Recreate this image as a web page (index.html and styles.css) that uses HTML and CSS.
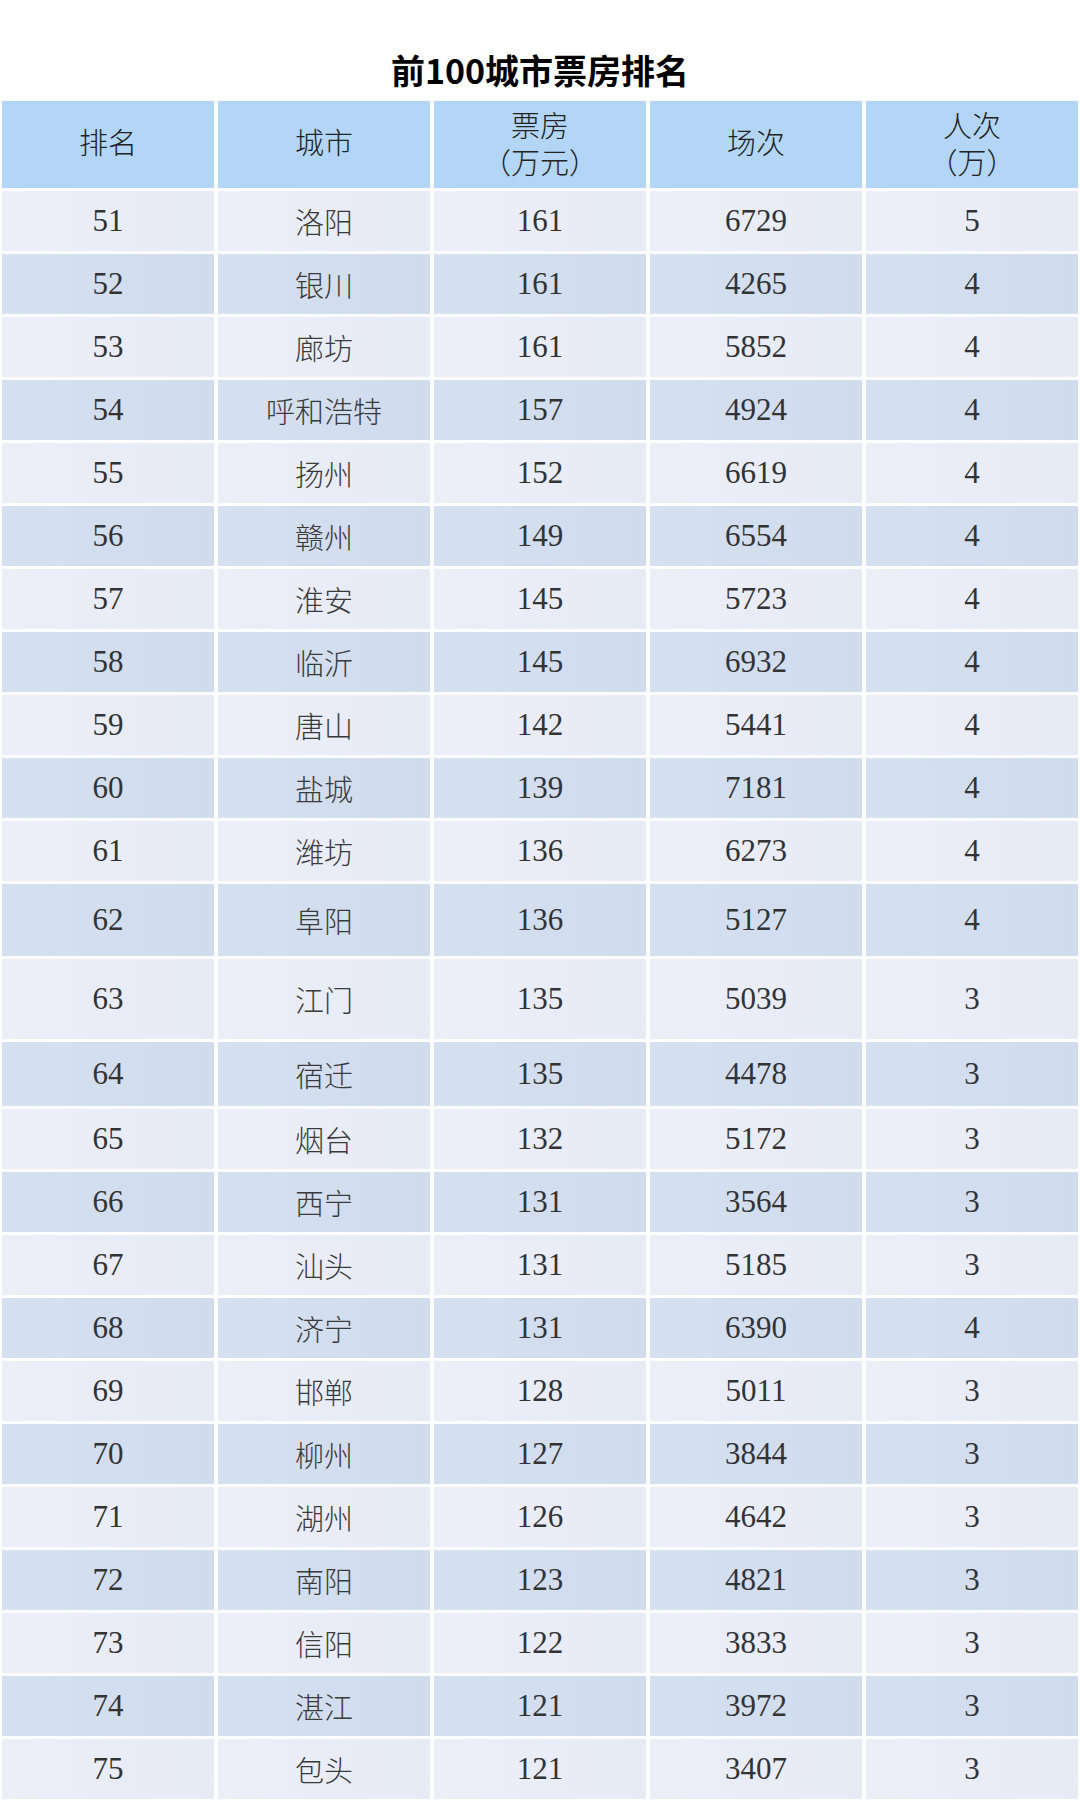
FILE: index.html
```html
<!DOCTYPE html>
<html lang="zh-CN">
<head>
<meta charset="utf-8">
<title>前100城市票房排名</title>
<link rel="stylesheet" href="styles.css">
</head>
<body>
<div class="page">
  <h1 class="title">前100城市票房排名</h1>
  <div class="table">
    <div class="row head">
      <div class="cell">排名</div>
      <div class="cell">城市</div>
      <div class="cell two">票房<br>（万元）</div>
      <div class="cell">场次</div>
      <div class="cell two">人次<br>（万）</div>
    </div>
    <div class="row odd"><div class="cell">51</div><div class="cell city">洛阳</div><div class="cell">161</div><div class="cell">6729</div><div class="cell">5</div></div>
    <div class="row even"><div class="cell">52</div><div class="cell city">银川</div><div class="cell">161</div><div class="cell">4265</div><div class="cell">4</div></div>
    <div class="row odd"><div class="cell">53</div><div class="cell city">廊坊</div><div class="cell">161</div><div class="cell">5852</div><div class="cell">4</div></div>
    <div class="row even"><div class="cell">54</div><div class="cell city">呼和浩特</div><div class="cell">157</div><div class="cell">4924</div><div class="cell">4</div></div>
    <div class="row odd"><div class="cell">55</div><div class="cell city">扬州</div><div class="cell">152</div><div class="cell">6619</div><div class="cell">4</div></div>
    <div class="row even"><div class="cell">56</div><div class="cell city">赣州</div><div class="cell">149</div><div class="cell">6554</div><div class="cell">4</div></div>
    <div class="row odd"><div class="cell">57</div><div class="cell city">淮安</div><div class="cell">145</div><div class="cell">5723</div><div class="cell">4</div></div>
    <div class="row even"><div class="cell">58</div><div class="cell city">临沂</div><div class="cell">145</div><div class="cell">6932</div><div class="cell">4</div></div>
    <div class="row odd"><div class="cell">59</div><div class="cell city">唐山</div><div class="cell">142</div><div class="cell">5441</div><div class="cell">4</div></div>
    <div class="row even"><div class="cell">60</div><div class="cell city">盐城</div><div class="cell">139</div><div class="cell">7181</div><div class="cell">4</div></div>
    <div class="row odd"><div class="cell">61</div><div class="cell city">潍坊</div><div class="cell">136</div><div class="cell">6273</div><div class="cell">4</div></div>
    <div class="row even tall-a"><div class="cell">62</div><div class="cell city">阜阳</div><div class="cell">136</div><div class="cell">5127</div><div class="cell">4</div></div>
    <div class="row odd tall-b"><div class="cell">63</div><div class="cell city">江门</div><div class="cell">135</div><div class="cell">5039</div><div class="cell">3</div></div>
    <div class="row even tall-c"><div class="cell">64</div><div class="cell city">宿迁</div><div class="cell">135</div><div class="cell">4478</div><div class="cell">3</div></div>
    <div class="row odd"><div class="cell">65</div><div class="cell city">烟台</div><div class="cell">132</div><div class="cell">5172</div><div class="cell">3</div></div>
    <div class="row even"><div class="cell">66</div><div class="cell city">西宁</div><div class="cell">131</div><div class="cell">3564</div><div class="cell">3</div></div>
    <div class="row odd"><div class="cell">67</div><div class="cell city">汕头</div><div class="cell">131</div><div class="cell">5185</div><div class="cell">3</div></div>
    <div class="row even"><div class="cell">68</div><div class="cell city">济宁</div><div class="cell">131</div><div class="cell">6390</div><div class="cell">4</div></div>
    <div class="row odd"><div class="cell">69</div><div class="cell city">邯郸</div><div class="cell">128</div><div class="cell">5011</div><div class="cell">3</div></div>
    <div class="row even"><div class="cell">70</div><div class="cell city">柳州</div><div class="cell">127</div><div class="cell">3844</div><div class="cell">3</div></div>
    <div class="row odd"><div class="cell">71</div><div class="cell city">湖州</div><div class="cell">126</div><div class="cell">4642</div><div class="cell">3</div></div>
    <div class="row even"><div class="cell">72</div><div class="cell city">南阳</div><div class="cell">123</div><div class="cell">4821</div><div class="cell">3</div></div>
    <div class="row odd"><div class="cell">73</div><div class="cell city">信阳</div><div class="cell">122</div><div class="cell">3833</div><div class="cell">3</div></div>
    <div class="row even"><div class="cell">74</div><div class="cell city">湛江</div><div class="cell">121</div><div class="cell">3972</div><div class="cell">3</div></div>
    <div class="row odd"><div class="cell">75</div><div class="cell city">包头</div><div class="cell">121</div><div class="cell">3407</div><div class="cell">3</div></div>
  </div>
</div>
</body>
</html>
```

FILE: styles.css
```css
html, body {
  margin: 0;
  padding: 0;
  background: #ffffff;
}

.page {
  width: 1080px;
  height: 1800px;
  overflow: hidden;
  background: #ffffff;
}

.title {
  margin: 0;
  padding: 50px 0 11px;
  height: 40px;
  line-height: 40px;
  text-align: center;
  font-family: "Noto Sans CJK SC", "Noto Sans", sans-serif;
  font-weight: 700;
  font-size: 34px;
  color: #000000;
}

.table {
  display: flex;
  flex-direction: column;
  gap: 3px;
  padding: 0 2px;
}

.row {
  display: grid;
  grid-template-columns: repeat(5, 1fr);
  column-gap: 4px;
  height: 60px;
}

.row.head { height: 87px; }
.row.tall-a { height: 72px; }
.row.tall-b { height: 80px; }
.row.tall-c { height: 64px; }

.cell {
  display: flex;
  align-items: center;
  justify-content: center;
  text-align: center;
  font-family: "Liberation Serif", "Noto Sans CJK SC", serif;
  font-weight: 300;
  font-size: 31px;
  color: #333333;
}

.cell.city {
  font-size: 29px;
  color: #3a3a3a;
}

.head .cell {
  background: #b3d6f6;
  color: #222222;
  font-size: 29px;
  line-height: 37px;
}

.head .cell.two {
  padding-top: 2px;
}

.odd .cell {
  background: linear-gradient(90deg, #eceff8 0%, #e7ebf6 100%);
}

.even .cell {
  background: linear-gradient(90deg, #d5e0f0 0%, #d0dcee 100%);
}
```
